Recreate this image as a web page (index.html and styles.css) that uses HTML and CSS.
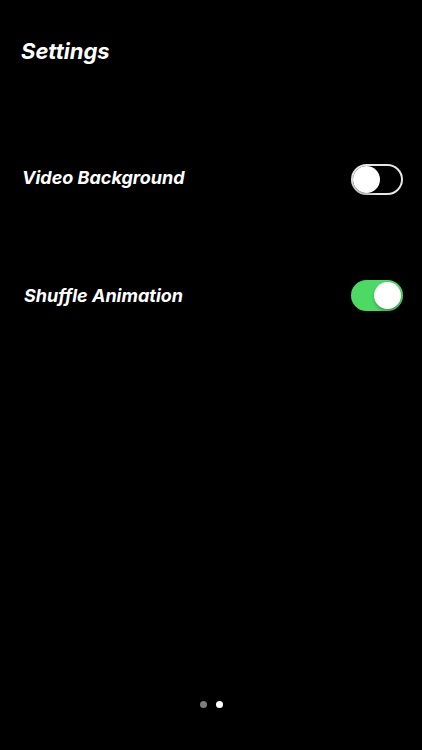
FILE: index.html
```html
<!DOCTYPE html>
<html>
<head>
<meta charset="utf-8">
<link rel="stylesheet" href="styles.css">
</head>
<body>
<div class="screen">
  <h1 class="title">Settings</h1>
  <div class="rows">
    <div class="row row-first">
      <span class="label">Video Background</span>
      <div class="toggle"><div class="knob"></div></div>
    </div>
    <div class="row row-indent">
      <span class="label">Shuffle Animation</span>
      <div class="toggle on"><div class="knob"></div></div>
    </div>
  </div>
  <div class="spacer"></div>
  <div class="dots">
    <span class="dot dim"></span>
    <span class="dot"></span>
  </div>
</div>
</body>
</html>
```
FILE: styles.css
```css
html, body {
  margin: 0;
  padding: 0;
  background: #000;
}
.screen {
  width: 422px;
  height: 750px;
  display: flex;
  flex-direction: column;
  font-family: Inter, "Liberation Sans", sans-serif;
  color: #fff;
}
.title {
  margin: 0;
  padding: 37px 0 0 21px;
  font-size: 22px;
  font-weight: 700;
  font-style: italic;
  line-height: 28px;
}
.rows {
  display: flex;
  flex-direction: column;
  gap: 85px;
  padding: 99px 19px 0 22px;
}
.row {
  display: flex;
  align-items: center;
  justify-content: space-between;
  height: 31px;
}
.row-first .label {
  padding-bottom: 4px;
}
.row-indent .label {
  padding-left: 2px;
}
.label {
  font-size: 18px;
  font-weight: 700;
  font-style: italic;
}
.toggle {
  width: 48px;
  height: 27px;
  border: 2px solid #e6e6e6;
  border-radius: 16px;
  position: relative;
  background: #000;
}
.toggle .knob {
  position: absolute;
  top: 0;
  left: 0;
  width: 27px;
  height: 27px;
  border-radius: 50%;
  background: #fff;
  box-shadow: 0 2px 3px rgba(0,0,0,0.25);
}
.toggle.on {
  background: #4cd964;
  border-color: #4cd964;
}
.toggle.on .knob {
  left: auto;
  right: 0;
}
.spacer {
  flex: 1;
}
.dots {
  display: flex;
  justify-content: center;
  gap: 9px;
  padding: 0 0 42px 0;
}
.dot {
  width: 7px;
  height: 7px;
  border-radius: 50%;
  background: #fff;
}
.dot.dim {
  background: #7f7f7f;
}
```
